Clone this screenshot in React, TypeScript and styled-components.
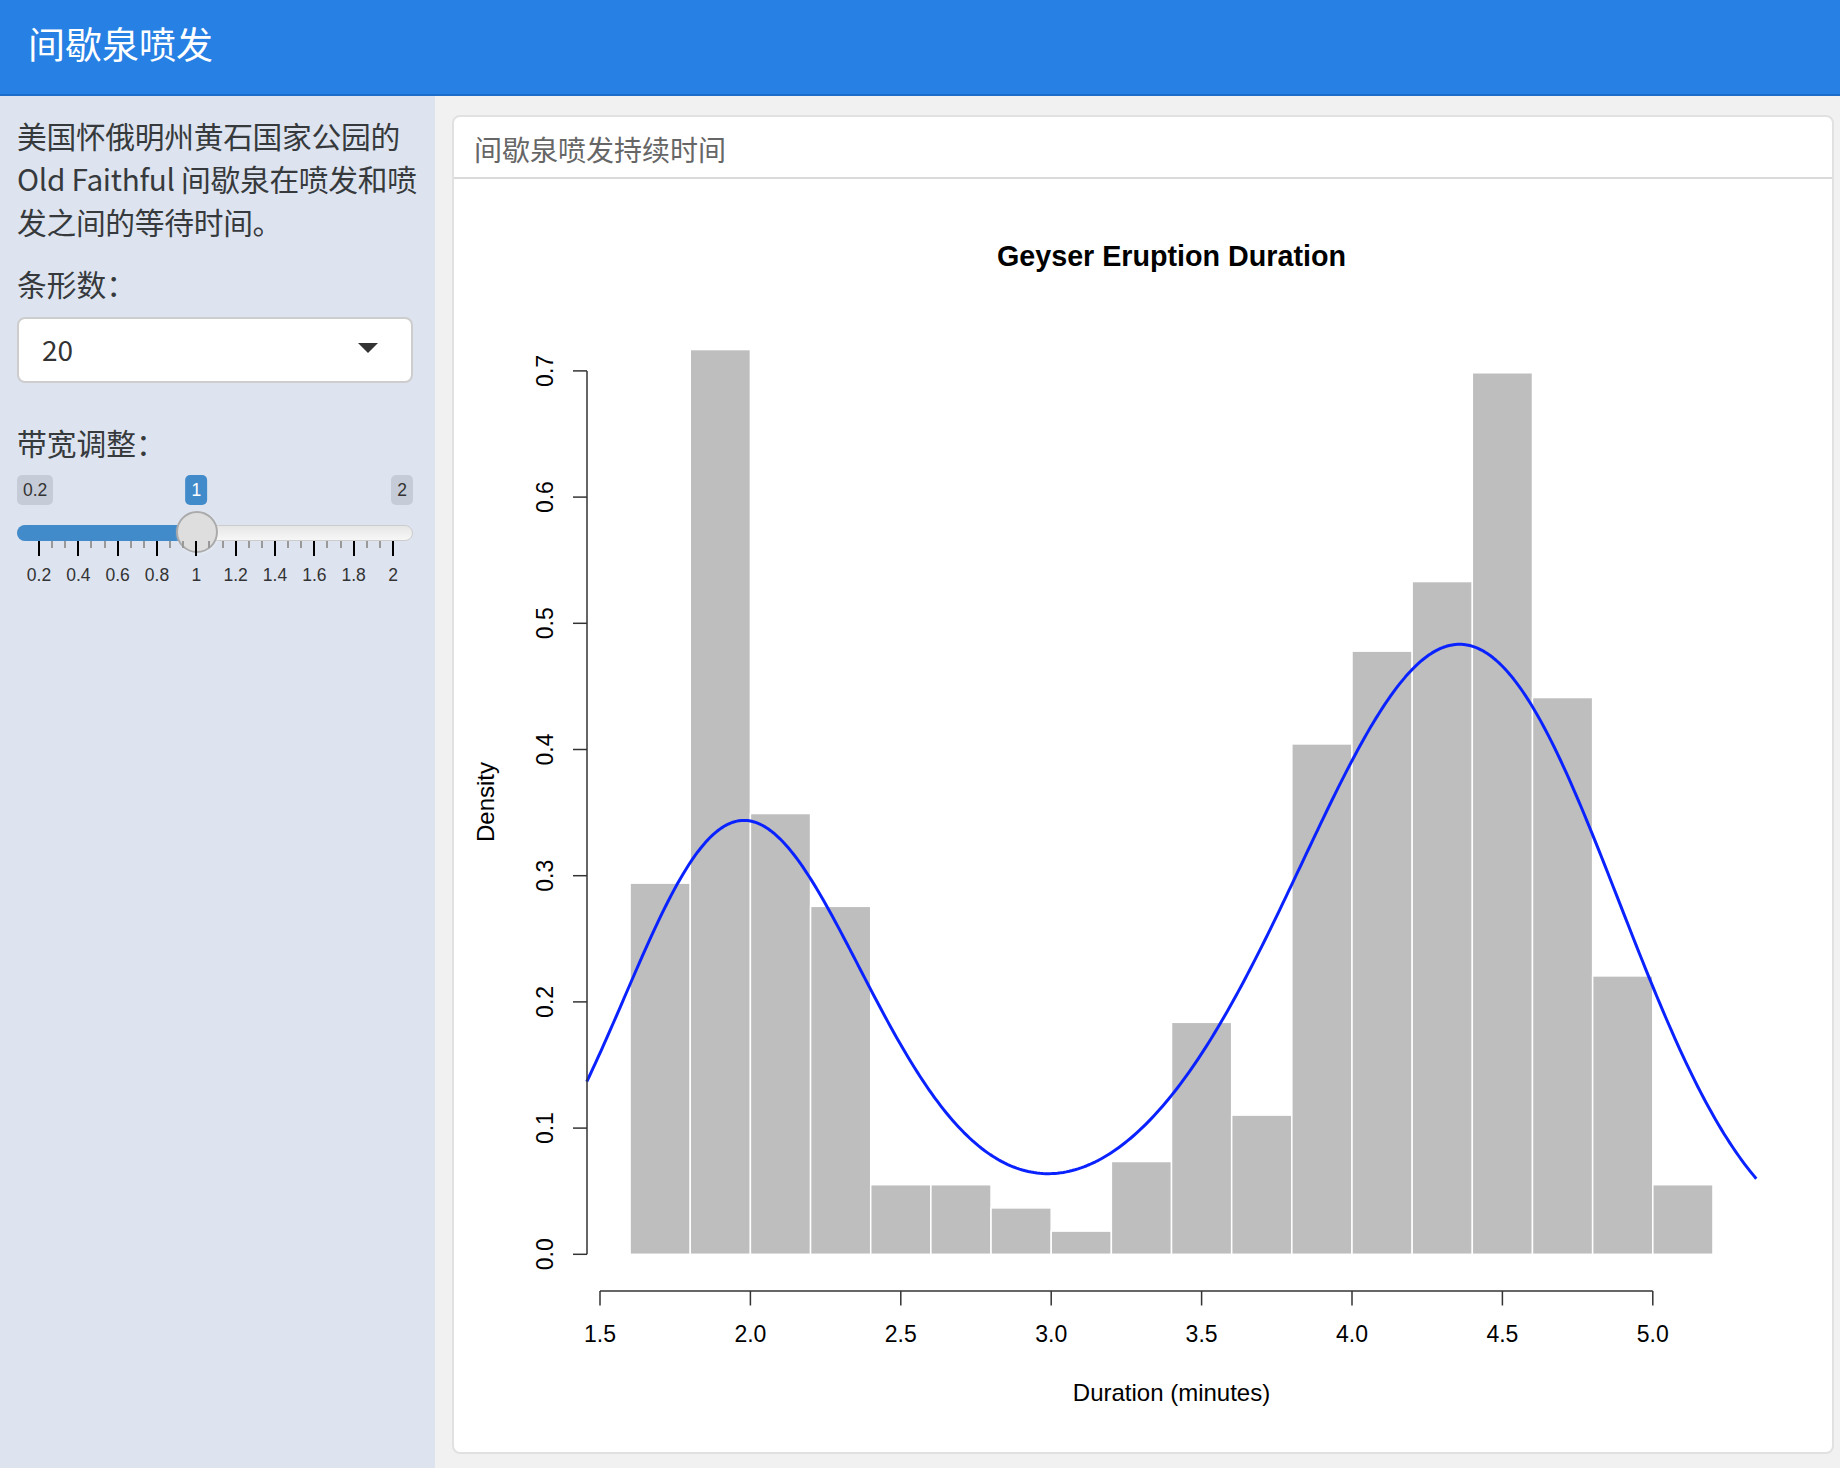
import React from "react";
import styled, { createGlobalStyle } from "styled-components";

const GlobalStyle = createGlobalStyle`
  html, body { margin: 0; padding: 0; }
  body {
    font-family: "Noto Sans CJK SC", "Noto Sans", sans-serif;
    color: #373a3c;
    background: #f1f1f1;
  }
  * { box-sizing: border-box; }
`;

const Page = styled.div`
  width: 1840px;
  height: 1468px;
  display: flex;
  flex-direction: column;
  overflow: hidden;
`;

const TopBar = styled.header`
  flex: 0 0 96px;
  height: 96px;
  background: #2780e3;
  border-bottom: 2px solid #1d6cc8;
  display: flex;
  align-items: center;
  padding: 0 0 7px 28px;
`;

const AppTitle = styled.h1`
  margin: 0;
  font-size: 37px;
  font-weight: 400;
  line-height: 1.2;
  color: #ffffff;
`;

const Body = styled.div`
  flex: 1;
  display: grid;
  grid-template-columns: 435px 1fr;
  min-height: 0;
`;

const Sidebar = styled.aside`
  background: #dde4f0;
  padding: 18px 22px 0 17px;
  display: flex;
  flex-direction: column;
`;

const Description = styled.p`
  margin: 0 -10px 0 0;
  font-size: 29.75px;
  line-height: 43.2px;
  letter-spacing: -0.3px;
  color: #373a3c;
`;

const FieldLabel = styled.label<{ $top: number; $bottom: number }>`
  display: block;
  margin: ${(p) => p.$top}px 0 ${(p) => p.$bottom}px;
  font-size: 29.75px;
  line-height: 43.2px;
  color: #373a3c;
`;

const SelectBox = styled.div`
  height: 66px;
  background: #ffffff;
  border: 2px solid #cdcdcd;
  border-radius: 8px;
  padding: 0 33px 0 23px;
  display: flex;
  align-items: center;
  justify-content: space-between;
  font-size: 28px;
  color: #333333;
`;

const SelectValue = styled.span`
  margin-top: -2px;
`;

const Caret = styled.span`
  width: 0;
  height: 0;
  border-left: 10px solid transparent;
  border-right: 10px solid transparent;
  border-top: 10px solid #333333;
  margin-top: -4px;
`;

const SliderWrap = styled.div`
  position: relative;
  padding-top: 50px;
  font-family: "Liberation Sans", Arial, sans-serif;
`;

const Bubble = styled.span<{ $active?: boolean }>`
  position: absolute;
  top: 0;
  height: 30px;
  line-height: 30px;
  padding: 0 6px;
  border-radius: 5px;
  font-size: 17.5px;
  color: ${(p) => (p.$active ? "#ffffff" : "#333333")};
  background: ${(p) => (p.$active ? "#428bca" : "rgba(0,0,0,0.1)")};
  white-space: nowrap;
`;

const Track = styled.div`
  position: relative;
  height: 16px;
  border-radius: 8px;
  border: 1px solid #cccccc;
  background: linear-gradient(to bottom, #dedede -50%, #ffffff 150%);
`;

const TrackFill = styled.div`
  position: absolute;
  top: -1px;
  left: -1px;
  height: 16px;
  border-radius: 8px 0 0 8px;
  background: #428bca;
`;

const Handle = styled.div`
  position: absolute;
  top: -15px;
  width: 42px;
  height: 42px;
  border-radius: 50%;
  background: #dedede;
  border: 2px solid #ababab;
  box-shadow: 1px 1px 3px rgba(255, 255, 255, 0.3);
`;

const Grid = styled.div`
  position: relative;
  height: 58px;
`;

const Tick = styled.span<{ $major?: boolean }>`
  position: absolute;
  top: 0;
  width: 2px;
  margin-left: -1px;
  height: ${(p) => (p.$major ? 15 : 7)}px;
  background: ${(p) => (p.$major ? "#000000" : "#999999")};
`;

const TickLabel = styled.span`
  position: absolute;
  top: 24px;
  transform: translateX(-50%);
  font-size: 17.5px;
  line-height: 20px;
  color: #333333;
  white-space: nowrap;
`;

const Main = styled.main`
  background: #f1f1f1;
  padding: 19px 6px 14px 17px;
  display: flex;
  min-height: 0;
`;

const Card = styled.section`
  flex: 1;
  display: flex;
  flex-direction: column;
  background: #ffffff;
  border: 2px solid #e1e1e1;
  border-radius: 8px;
  overflow: hidden;
`;

const CardHeader = styled.div`
  flex: 0 0 62px;
  height: 62px;
  border-bottom: 2px solid #dadada;
  padding: 5px 20px 0;
  font-size: 28px;
  line-height: 55px;
  color: #666666;
`;

const CardBody = styled.div`
  flex: 1;
  min-height: 0;
`;

const PlotSvg = styled.svg`
  display: block;
  width: 100%;
  height: 100%;
`;

const PlotText = styled.text<{ $size?: number; $bold?: boolean }>`
  font-family: "Liberation Sans", Arial, Helvetica, sans-serif;
  font-size: ${(p) => p.$size ?? 23}px;
  font-weight: ${(p) => (p.$bold ? 700 : 400)};
  fill: #000000;
`;

/* ---------- data ---------- */
const counts = [16, 39, 19, 15, 3, 3, 2, 1, 4, 10, 6, 22, 26, 29, 38, 24, 12, 3];
/* where, inside each (lo, hi] bin, the observations lie: [from, to] as fractions of the bin */
const spread: [number, number][] = [
  [0.45, 1.0], [0, 1.0], [0.0, 1.0], [0.0, 0.9], [0, 1], [0, 1], [0, 1], [0, 1], [0.2, 1],
  [0.55, 1.0], [0.2, 1.0], [0.3, 1.0], [0.1, 1.0], [0, 1.0], [0.05, 1.0], [0.15, 1.0], [0.15, 1.0], [0, 0.6],
];
const N = counts.reduce((a, b) => a + b, 0);
const BW = 0.2;
const START = 1.6;
const H = 0.3348;

const X = (v: number) => 601 + (v - 1.5) * 300.8;
const Y = (d: number) => 1254.3 - d * 1262;

const samples: number[] = [];
counts.forEach((c, i) => {
  const [a, b] = spread[i];
  const lo = START + BW * i;
  for (let j = 0; j < c; j++) samples.push(lo + BW * (a + ((b - a) * (j + 0.5)) / c));
});

const density = (x: number) => {
  let s = 0;
  for (const p of samples) {
    const z = (x - p) / H;
    s += Math.exp(-0.5 * z * z);
  }
  return s / (samples.length * H * Math.sqrt(2 * Math.PI));
};

const X0 = 1.456;
const X1 = 5.344;

const buildCurve = () => {
  const parts: string[] = [];
  const steps = 400;
  for (let i = 0; i <= steps; i++) {
    const v = X0 + ((X1 - X0) * i) / steps;
    parts.push(`${i === 0 ? "M" : "L"}${X(v).toFixed(2)},${Y(density(v)).toFixed(2)}`);
  }
  return parts.join(" ");
};

const yTicks = [0, 0.1, 0.2, 0.3, 0.4, 0.5, 0.6, 0.7];
const xTicks = [1.5, 2.0, 2.5, 3.0, 3.5, 4.0, 4.5, 5.0];

const Histogram: React.FC = () => {
  const curve = buildCurve();
  const baseY = Y(0);
  return (
    <PlotSvg viewBox="455 179 1377 1273" preserveAspectRatio="xMinYMin meet">
      <PlotText x={1172.5} y={265.5} textAnchor="middle" $size={28.7} $bold>
        Geyser Eruption Duration
      </PlotText>

      {counts.map((c, i) => {
        const x0 = X(START + BW * i);
        const x1 = X(START + BW * (i + 1));
        const top = Y(c / (N * BW));
        return (
          <rect
            key={i}
            x={x0}
            y={top}
            width={x1 - x0}
            height={baseY - top}
            fill="#bebebe"
            stroke="#ffffff"
            strokeWidth={1.5}
          />
        );
      })}

      <path d={curve} fill="none" stroke="#0a22ff" strokeWidth={3} strokeLinejoin="round" />

      {/* y axis */}
      <line x1={588} y1={Y(0)} x2={588} y2={Y(0.7)} stroke="#333" strokeWidth={1.5} />
      {yTicks.map((t) => (
        <g key={t}>
          <line x1={574} y1={Y(t)} x2={588} y2={Y(t)} stroke="#333" strokeWidth={1.5} />
          <PlotText
            x={554}
            y={Y(t)}
            textAnchor="middle"
            transform={`rotate(-90 554 ${Y(t)})`}
          >
            {t.toFixed(1)}
          </PlotText>
        </g>
      ))}

      {/* x axis */}
      <line x1={X(1.5)} y1={1291} x2={X(5.0)} y2={1291} stroke="#333" strokeWidth={1.5} />
      {xTicks.map((t) => (
        <g key={t}>
          <line x1={X(t)} y1={1291} x2={X(t)} y2={1305.5} stroke="#333" strokeWidth={1.5} />
          <PlotText x={X(t)} y={1342} textAnchor="middle">
            {t.toFixed(1)}
          </PlotText>
        </g>
      ))}

      <PlotText x={1172.5} y={1401} textAnchor="middle" $size={24}>
        Duration (minutes)
      </PlotText>
      <PlotText x={495} y={802} textAnchor="middle" $size={24} transform="rotate(-90 495 802)">
        Density
      </PlotText>
    </PlotSvg>
  );
};

/* ---------- slider ---------- */
const SMIN = 0.2;
const SMAX = 2;
const SVAL = 1;
const PAD = 22;
const SPAN = 354;
const pos = (v: number) => PAD + ((v - SMIN) / (SMAX - SMIN)) * SPAN;

const majorVals = [0.2, 0.4, 0.6, 0.8, 1, 1.2, 1.4, 1.6, 1.8, 2];
const fmt = (v: number) => {
  const r = Math.round(v * 10) / 10;
  return Number.isInteger(r) ? String(r) : r.toFixed(1);
};

const BandwidthSlider: React.FC = () => {
  const handleX = pos(SVAL);
  const minors: number[] = [];
  for (let i = 0; i < majorVals.length - 1; i++) {
    const a = majorVals[i];
    const b = majorVals[i + 1];
    minors.push(a + (b - a) / 3, a + (2 * (b - a)) / 3);
  }
  return (
    <SliderWrap>
      <Bubble style={{ left: 0 }}>0.2</Bubble>
      <Bubble style={{ right: 0 }}>2</Bubble>
      <Bubble $active style={{ left: handleX, transform: "translateX(-50%)" }}>
        1
      </Bubble>
      <Track>
        <TrackFill style={{ width: handleX }} />
        <Handle style={{ left: handleX - 21 }} />
      </Track>
      <Grid>
        {minors.map((v, i) => (
          <Tick key={`m${i}`} style={{ left: pos(v) }} />
        ))}
        {majorVals.map((v) => (
          <React.Fragment key={v}>
            <Tick $major style={{ left: pos(v) }} />
            <TickLabel style={{ left: pos(v) }}>{fmt(v)}</TickLabel>
          </React.Fragment>
        ))}
      </Grid>
    </SliderWrap>
  );
};

export default function App() {
  return (
    <Page>
      <GlobalStyle />
      <TopBar>
        <AppTitle>间歇泉喷发</AppTitle>
      </TopBar>
      <Body>
        <Sidebar>
          <Description>
            美国怀俄明州黄石国家公园的 Old Faithful 间歇泉在喷发和喷发之间的等待时间。
          </Description>
          <FieldLabel $top={18} $bottom={12}>条形数：</FieldLabel>
          <SelectBox>
            <SelectValue>20</SelectValue>
            <Caret />
          </SelectBox>
          <FieldLabel $top={38} $bottom={11}>带宽调整：</FieldLabel>
          <BandwidthSlider />
        </Sidebar>
        <Main>
          <Card>
            <CardHeader>间歇泉喷发持续时间</CardHeader>
            <CardBody>
              <Histogram />
            </CardBody>
          </Card>
        </Main>
      </Body>
    </Page>
  );
}
